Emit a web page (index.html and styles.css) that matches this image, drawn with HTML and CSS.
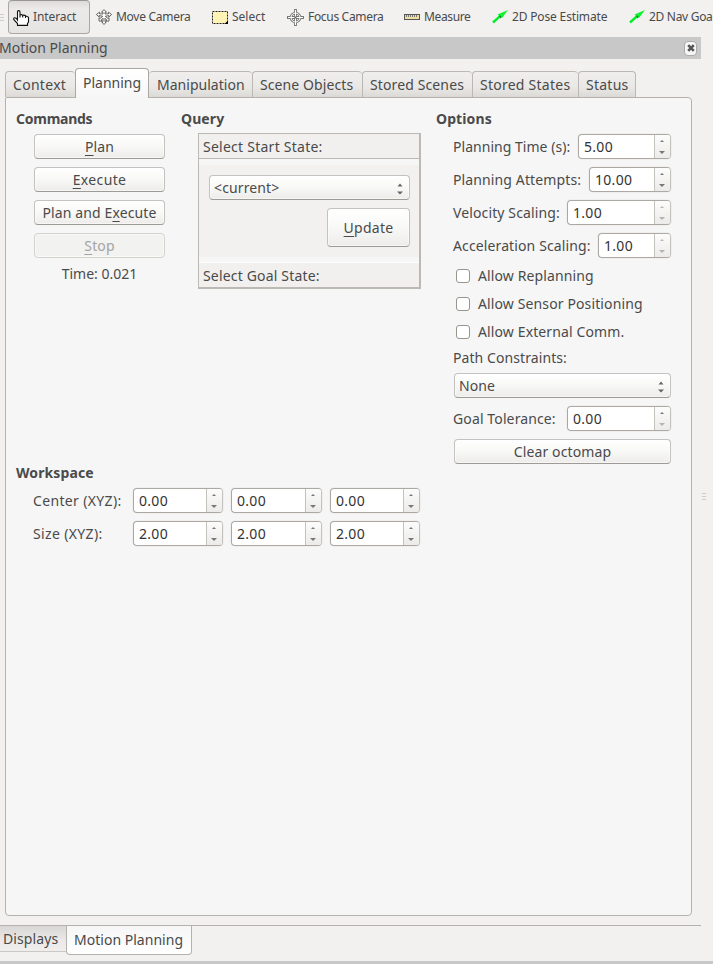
FILE: index.html
```
<!DOCTYPE html>
<html lang="en">
<head>
<meta charset="utf-8">
<title>Motion Planning</title>
<link rel="stylesheet" href="styles.css">
</head>
<body>
<svg class="defs" width="0" height="0">
  <symbol id="arrow" viewBox="0 0 17 15"><path d="M1 13.5L8 7.2" stroke="#00f02a" stroke-width="2.4" fill="none"/><path d="M5.5 5.500L16 1L10 9Z" fill="#0df52d"/><path d="M7 7l2 .4l-.6 1.8" stroke="#087b1c" fill="none"/></symbol>
  <symbol id="updown" viewBox="0 0 8 14"><path d="M1.5 4.5L4 1.5L6.500 4.500ZM1 9.500H7L4 12.500Z" fill="#666"/></symbol>
</svg>

<header class="toolbar">
  <div class="handle"><i></i><i></i><i></i></div>
  <div class="tool active interact">
    <svg width="17" height="16" viewBox="0 0 17 16"><path d="M4.500 10V2Q4.500 .600 5.700 .600Q7 .600 7 2V7.500V5.200Q8.300 4 9.700 5.200V7.500V5.700Q11 4.600 12.500 5.800V8V6.500Q14.500 5.600 15.500 7.500V12L14.500 13.500V15.400H4.500V13.500L.700 9.500Q.500 7.700 2 7.800Q3.500 8.200 4.500 10Z" fill="#fff" stroke="#111" stroke-width="1.100"/></svg>
    <span>Interact</span>
  </div>
  <div class="tool move">
    <svg width="16" height="16" viewBox="0 0 16 16" fill="#fff" stroke="#555" stroke-width=".9"><path d="M8 .600L10.500 3.200H9V5L12.500 4.800V3.200L15.600 5.500L12.800 8V6.500L9.300 7.300L12 9.500L13 8.700V12H9.800L10.800 11L9 9.200V12.800H10.400L8 15.500L5.600 12.800H7V9.200L5.200 11L6.200 12H3V8.700L4 9.500L6.700 7.300L3.200 6.500V8L.400 5.500L3.500 3.200V4.800L7 5V3.200H5.500Z"/></svg>
    <span>Move Camera</span>
  </div>
  <div class="tool select">
    <svg width="16" height="13" viewBox="0 0 16 13"><rect x=".5" y=".5" width="15" height="12" fill="#fff4b5" stroke="#222" stroke-dasharray="2 1"/><path d="M16 9.500V13H12.500Z" fill="#000"/></svg>
    <span>Select</span>
  </div>
  <div class="tool focus">
    <svg width="17" height="17" viewBox="0 0 17 17" fill="none"><circle cx="8.500" cy="8.500" r="4.500" stroke="#777" stroke-width="2.600"/><path d="M8.500 0V17M0 8.500H17" stroke="#777" stroke-width="2.800"/><circle cx="8.500" cy="8.500" r="4.500" stroke="#fff" stroke-width="1"/><path d="M8.500 1V16M1 8.500H16" stroke="#fff" stroke-width="1"/><path d="M8.500 7.500V9.500M7.500 8.500H9.500" stroke="#666"/></svg>
    <span>Focus Camera</span>
  </div>
  <div class="tool measure">
    <svg width="16" height="6" viewBox="0 0 16 6"><rect x=".5" y=".5" width="15" height="5" fill="#f0df9f" stroke="#555"/><path d="M2.500 1V3M4.500 1V3M6.500 1V3M8.500 1V3M10.500 1V3M12.500 1V3" stroke="#777"/></svg>
    <span>Measure</span>
  </div>
  <div class="tool pose"><svg width="17" height="15"><use href="#arrow"/></svg><span>2D Pose Estimate</span></div>
  <div class="tool nav"><svg width="17" height="15"><use href="#arrow"/></svg><span>2D Nav Goal</span></div>
</header>

<div class="titlebar">
  <span>Motion Planning</span>
  <button class="close" aria-label="Close"><svg width="8" height="8" viewBox="0 0 8 8"><path d="M1.200 1.200L6.800 6.800M6.800 1.200L1.200 6.800" stroke="#555" stroke-width="2.600"/></svg></button>
</div>

<nav class="tabs">
  <div class="tab context wide">Context</div>
  <div class="tab planning current">Planning</div>
  <div class="tab manipulation">Manipulation</div>
  <div class="tab objects">Scene Objects</div>
  <div class="tab scenes">Stored Scenes</div>
  <div class="tab states">Stored States</div>
  <div class="tab status">Status</div>
</nav>

<div class="middle">
<main class="panel">
  <section class="commands">
    <h2 class="snug">Commands</h2>
    <div class="stack">
      <button class="btn"><span><u>P</u>lan</span></button>
      <button class="btn wide"><span><u>E</u>xecute</span></button>
      <button class="btn"><span>Plan and E<u>x</u>ecute</span></button>
      <button class="btn disabled"><span><u>S</u>top</span></button>
    </div>
    <p class="time">Time: 0.021</p>
  </section>

  <section class="query">
    <h2>Query</h2>
    <div class="toolbox">
      <div class="page-head start">Select Start State:</div>
      <div class="page">
        <div class="combo"><span>&lt;current&gt;</span><svg width="8" height="14"><use href="#updown"/></svg></div>
        <button class="btn update"><span><u>U</u>pdate</span></button>
      </div>
      <div class="page-head goal">Select Goal State:</div>
    </div>
  </section>

  <section class="options">
    <h2>Options</h2>
    <div class="stack">
      <div class="field"><label class="time-label">Planning Time (s):</label><div class="spin w93"><span>5.00</span><i class="steps"></i></div></div>
      <div class="field"><label>Planning Attempts:</label><div class="spin w82"><span>10.00</span><i class="steps"></i></div></div>
      <div class="field"><label>Velocity Scaling:</label><div class="spin w104 limit"><span>1.00</span><i class="steps"></i></div></div>
      <div class="field"><label>Acceleration Scaling:</label><div class="spin w73 limit"><span>1.00</span><i class="steps"></i></div></div>
    </div>
    <div class="checks">
      <label class="check"><i></i>Allow Replanning</label>
      <label class="check"><i></i>Allow Sensor Positioning</label>
      <label class="check"><i></i>Allow External Comm.</label>
    </div>
    <p class="path">Path Constraints:</p>
    <div class="stack lower">
      <div class="combo"><span>None</span><svg width="8" height="14"><use href="#updown"/></svg></div>
      <div class="field"><label>Goal Tolerance:</label><div class="spin w104 floor"><span>0.00</span><i class="steps"></i></div></div>
      <button class="btn"><span>Clear octomap</span></button>
    </div>
  </section>

  <section class="workspace">
    <h2>Workspace</h2>
    <div class="xyz">
      <label>Center (XYZ):</label>
      <div class="spin"><span>0.00</span><i class="steps"></i></div>
      <div class="spin mid"><span>0.00</span><i class="steps"></i></div>
      <div class="spin"><span>0.00</span><i class="steps"></i></div>
      <label>Size (XYZ):</label>
      <div class="spin"><span>2.00</span><i class="steps"></i></div>
      <div class="spin mid"><span>2.00</span><i class="steps"></i></div>
      <div class="spin"><span>2.00</span><i class="steps"></i></div>
    </div>
  </section>
</main>
<div class="splitter"><i></i><i></i><i></i></div>
</div>

<footer class="dock-tabs">
  <div class="dock displays">Displays</div>
  <div class="dock front">Motion Planning</div>
</footer>
<div class="bottom-edge"></div>
</body>
</html>
```
FILE: styles.css
```
* { box-sizing: border-box; }
html, body { margin: 0; height: 964px; overflow: hidden; }
body {
  display: flex;
  flex-direction: column;
  width: 713px;
  background: #f2f1ef;
  color: #4a4a4a;
  font: 14px/20px "Noto Sans", "Open Sans", sans-serif;
  letter-spacing: 0.12px;
  white-space: nowrap;
}
.defs { position: absolute; }
h2, p { margin: 0; font-size: 14px; line-height: 20px; }
h2 { font-weight: bold; letter-spacing: 0.1px; }
.snug { letter-spacing: -0.25px; }
u { text-decoration-thickness: 1px; text-underline-offset: 3px; text-decoration-skip-ink: none; }

/* Toolbar */
.toolbar { display: flex; flex: 0 0 37px; height: 37px; font-size: 12px; letter-spacing: -0.2px; }
.tool { display: flex; flex: none; align-items: center; height: 34px; }
.tool svg { flex: none; }
.handle { flex: 0 0 8px; padding-top: 14px; }
.handle i { display: block; width: 4px; height: 1px; margin-bottom: 2px; background: #cfcdca; }
.interact {
  width: 82px;
  padding-left: 4px;
  border: 1px solid #aaa7a3;
  border-top-color: #9a9793;
  border-radius: 4px;
  background: linear-gradient(#dedcda, #eceae8 25%, #e6e4e2);
  gap: 3px;
  letter-spacing: -0.1px;
}
.interact svg { margin-top: 2px; }
.move { width: 122px; padding-left: 6px; gap: 4px; letter-spacing: -0.28px; }
.select { width: 75px; gap: 4px; letter-spacing: 0; }
.focus { width: 117px; gap: 4px; letter-spacing: -0.32px; }
.measure { width: 88px; gap: 4px; letter-spacing: -0.36px; }
.pose { width: 137px; gap: 3px; letter-spacing: -0.16px; }
.nav { gap: 3px; letter-spacing: -0.3px; }
.nav svg, .pose svg { margin-top: -1px; }

/* Dock title */
.titlebar {
  display: flex;
  flex: 0 0 22px;
  align-items: center;
  justify-content: space-between;
  width: 701px;
  padding: 0 4px 0 0;
  background: #c8c8c8;
  letter-spacing: 0;
}
.titlebar span { margin-left: -1px; }
.close {
  display: grid;
  place-items: center;
  width: 13px;
  height: 15px;
  padding: 0;
  border: 1px solid #aaa;
  border-radius: 4px;
  background: #f6f6f6;
}

/* Tabs */
.tabs { display: flex; flex: 0 0 38px; align-items: flex-end; padding-left: 5px; }
.tab {
  flex: none;
  height: 26px;
  padding-left: 7px;
  border: 1px solid #bbb7b2;
  border-width: 1px 0 0 1px;
  border-radius: 4px 4px 0 0;
  background: linear-gradient(#f0efed, #e9e8e6 60%, #dcdad7);
  line-height: 25px;
}
.wide { letter-spacing: 0.3px; }
.context { width: 70px; }
.planning {
  z-index: 1;
  width: 74px;
  height: 30px;
  margin-bottom: -1px;
  border-width: 1px 1px 0;
  border-color: #aaa7a3 #aaa7a3 #f6f6f6;
  background: linear-gradient(#fff, #f6f6f6);
  letter-spacing: 0;
  line-height: 28px;
}
.manipulation { width: 103px; border-left: 0; padding-left: 8px; letter-spacing: 0.02px; }
.objects { width: 110px; letter-spacing: 0.1px; }
.scenes { width: 110px; letter-spacing: 0.12px; }
.states { width: 106px; letter-spacing: 0.25px; }
.status { width: 58px; border-right-width: 1px; letter-spacing: 0.25px; }

/* Panel */
.middle { display: flex; flex: 0 0 819px; }
.panel {
  display: grid;
  grid-template: 354px 1fr / 165px 255px 1fr;
  width: 687px;
  height: 819px;
  margin-left: 5px;
  padding: 11px 0 0 10px;
  border: 1px solid #b5b2ae;
  border-radius: 2px 4px 4px 4px;
  background: #f6f6f6;
}
.splitter { padding: 396px 0 0 10px; }
.splitter i { display: block; width: 4px; height: 1px; margin-bottom: 2px; background: #cfcdca; }

/* Controls */
.btn, .combo {
  border: 1px solid #c4c2be;
  border-bottom-color: #9e9b97;
  border-radius: 4px;
  background: linear-gradient(#fff, #f9f9f8 45%, #edecea);
  box-shadow: inset 0 0 0 1px rgba(255, 255, 255, 0.5);
  color: #4a4a4a;
}
.btn { display: block; width: 100%; height: 25px; padding: 0; font: inherit; line-height: 22px; letter-spacing: 0.12px; }
.btn.wide { letter-spacing: 0.35px; }
.btn.disabled { border-color: #d4d2cf; background: #f2f2f1; color: #a5a4a2; }
.combo { display: flex; align-items: center; justify-content: space-between; height: 25px; padding: 0 5px 0 4px; }
.combo svg { margin-top: 3px; }
.stack { display: flex; flex-direction: column; gap: 8px; }

.commands .stack { width: 131px; margin: 5px 0 0 18px; }
.time { margin: 6px 0 0 18px; width: 131px; text-align: center; letter-spacing: 0; }

.toolbox { width: 223px; height: 156px; margin: 4px 0 0 17px; border: 1px solid #bcb9b5; border-right-width: 2px; border-bottom-width: 2px; }
.page-head { padding-left: 4px; background: #f1f0ee; line-height: 24px; }
.start { height: 25px; border-bottom: 1px solid #bcb9b5; letter-spacing: 0.25px; line-height: 26px; }
.goal { height: 25px; border-top: 1px solid #fff; letter-spacing: 0.17px; line-height: 25px; }
.page { height: 103px; padding: 16px 9px 0 10px; background: linear-gradient(#f6f6f6 6px, #f2f1ef 6px 98px, #f6f6f6 98px); }
.btn.update { width: 83px; height: 39px; margin: 8px 0 0 auto; letter-spacing: 0.25px; }

.options .stack { width: 218px; margin: 5px 0 0 17px; }
.options .stack .combo, .options .stack .btn { width: 217px; margin-left: 1px; }
.field { display: flex; align-items: center; justify-content: space-between; height: 25px; }
.time-label { letter-spacing: 0.03px; }
.spin {
  display: flex;
  width: 90px;
  height: 25px;
  border: 1px solid #aca9a5;
  border-right-color: #c5c2be;
  border-radius: 4px;
  background: #fff;
  box-shadow: 0 0 0 1px #f0efee;
  color: #333;
  letter-spacing: 0.3px;
  line-height: 24px;
  overflow: hidden;
}
.spin span { flex: 1; padding-left: 5px; }
.w93 { width: 93px; }
.w82 { width: 82px; }
.w104 { width: 104px; }
.w73 { width: 73px; }
.steps {
  display: flex;
  flex: 0 0 16px;
  flex-direction: column;
  align-items: center;
  justify-content: space-between;
  padding: 5px 1px 4px 0;
  border-left: 1px solid #c5c2be;
  background: linear-gradient(#fcfcfc, #ecebe9);
}
.steps::before { content: ""; border: 2px solid transparent; border-top: 0; border-bottom: 2px solid #777; }
.steps::after { content: ""; border: 3px solid transparent; border-bottom: 0; border-top: 3px solid #777; }
.limit .steps::before, .limit .steps::after, .floor .steps::after { opacity: 0.5; }

.checks { display: flex; flex-direction: column; gap: 8px; margin: 8px 0 0 20px; }
.check { display: flex; align-items: center; gap: 8px; }
.check i { width: 14px; height: 14px; border: 1px solid #98958f; border-radius: 3px; background: #fff; }
.path { margin: 6px 0 0 17px; letter-spacing: 0.08px; }
.options .lower { margin-top: 5px; }

.workspace { grid-column: 1 / -1; }
.xyz { display: grid; grid-template-columns: 92px 90px 91px 90px; gap: 8px; align-items: center; margin: 5px 0 0 17px; }
.xyz label { letter-spacing: 0.35px; }
.spin.mid { width: 91px; }

/* Bottom dock tabs */
.dock-tabs { display: flex; align-items: flex-start; width: 701px; height: 36px; margin-top: 9px; border-top: 1px solid #b5b2ae; }
.dock { border: 1px solid #b5b2ae; border-top: 0; }
.displays { width: 66px; height: 26px; padding-left: 3px; border-width: 0 0 1px; border-color: #cbc9c6; background: linear-gradient(#d8d7d5, #ebeae8 60%, #f0efed); line-height: 26px; letter-spacing: 0.1px; }
.front { width: 126px; height: 29px; padding-left: 7px; border-radius: 0 0 4px 4px; background: linear-gradient(#f6f6f6, #fff); line-height: 28px; letter-spacing: 0.02px; }
.bottom-edge { flex: 1; background: #c8c8c8; }
```
